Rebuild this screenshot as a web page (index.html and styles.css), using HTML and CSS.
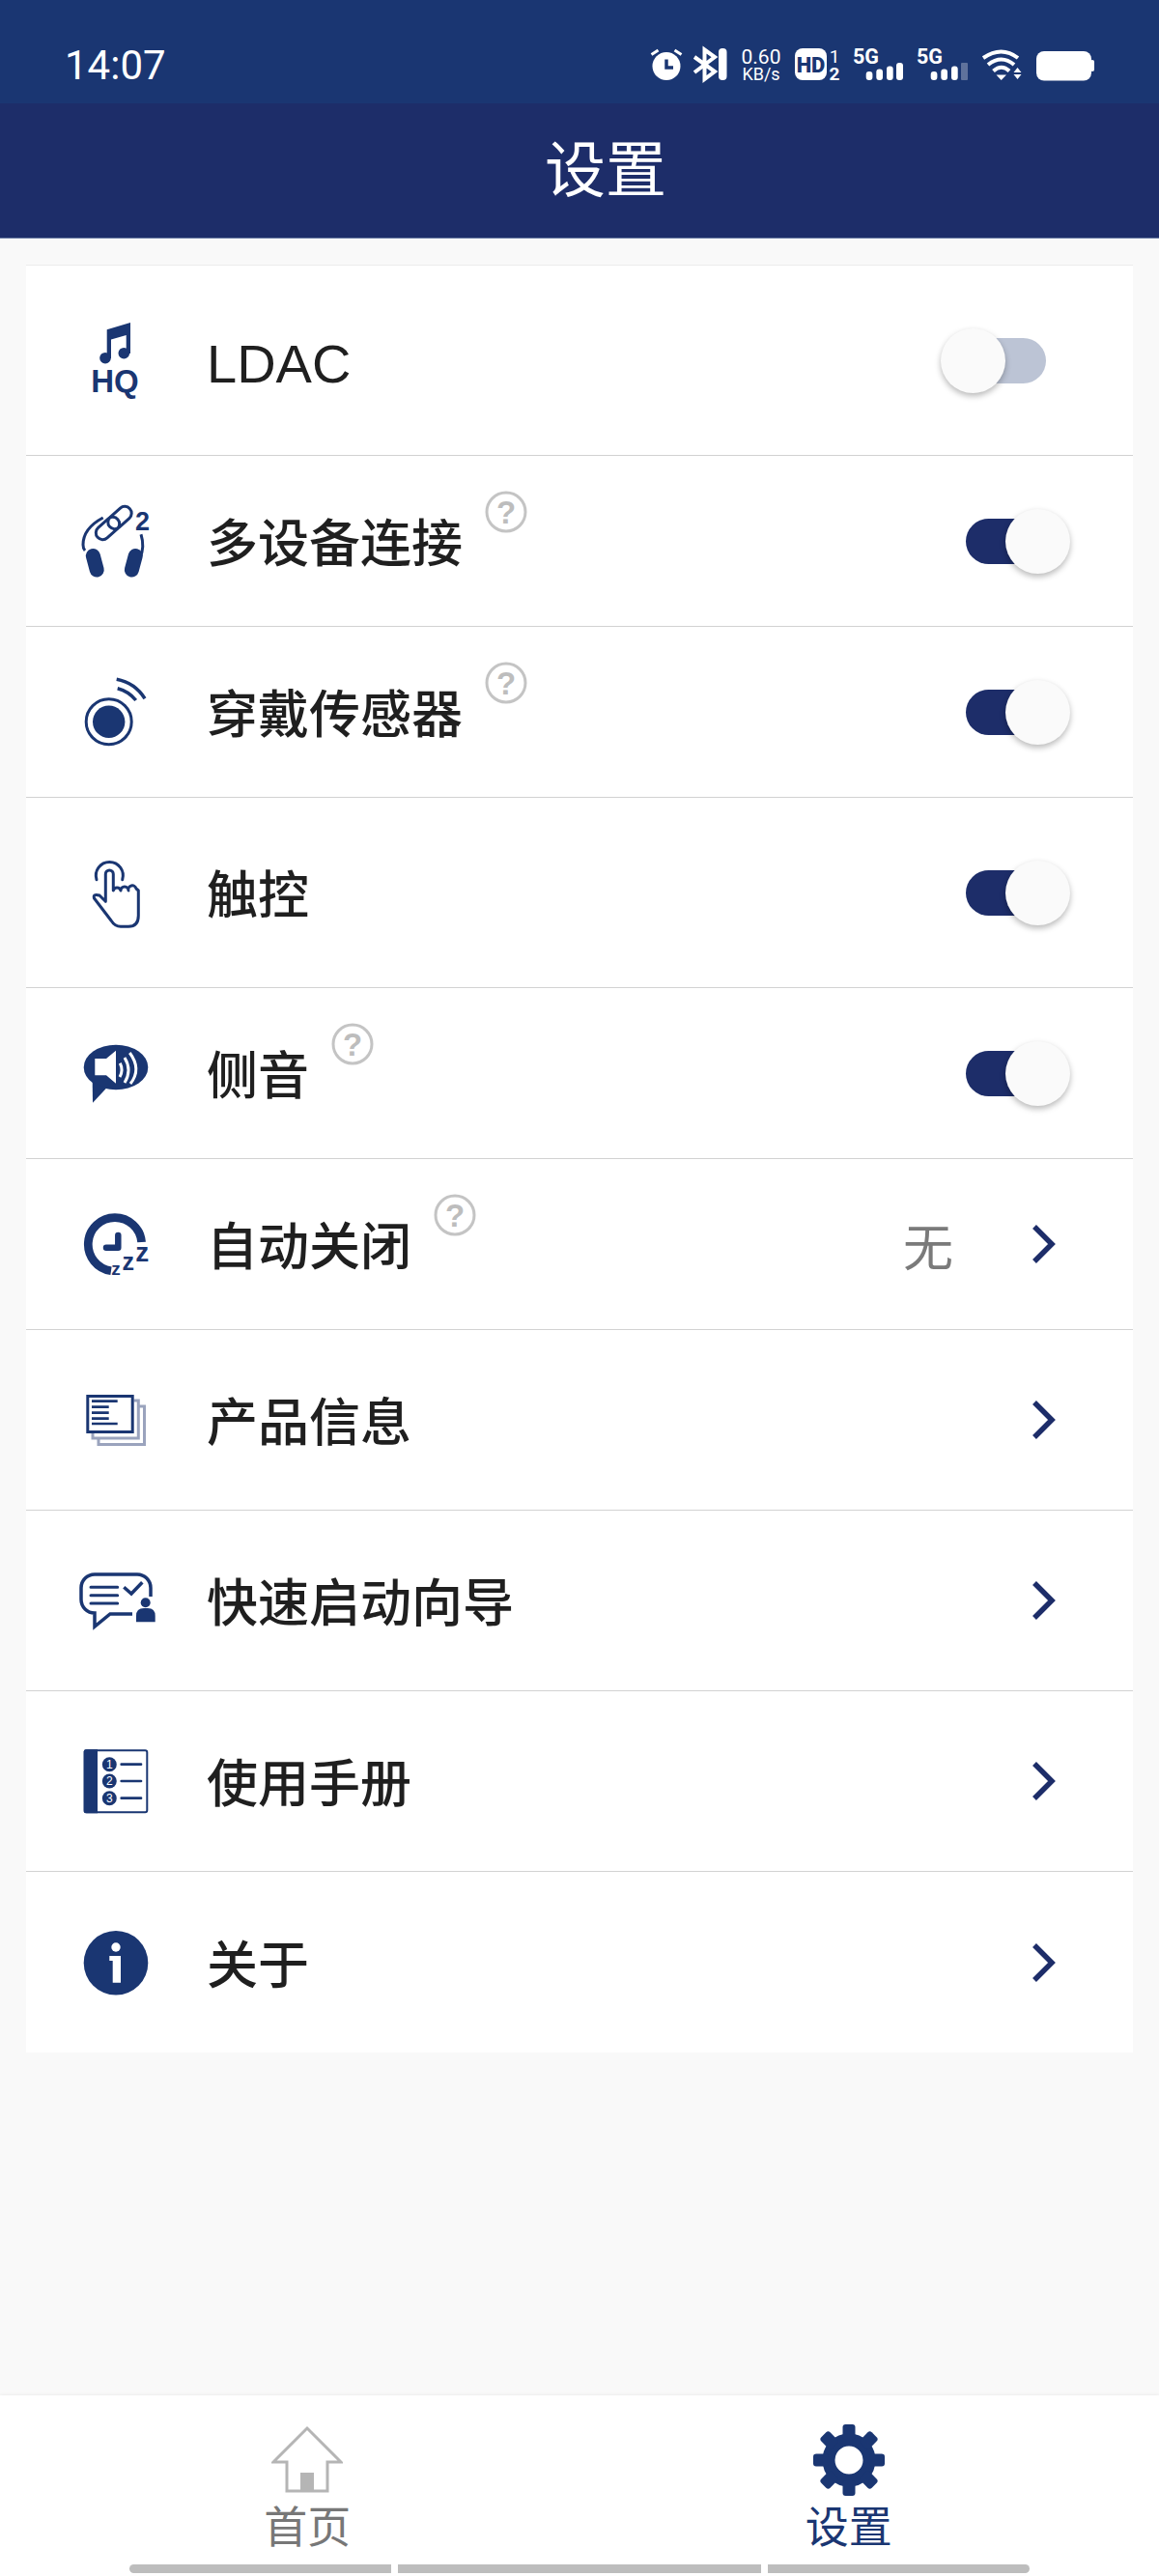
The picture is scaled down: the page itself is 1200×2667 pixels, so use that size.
FILE: index.html
```html
<!DOCTYPE html>
<html lang="zh-CN">
<head>
<meta charset="utf-8">
<title>设置</title>
<link rel="stylesheet" href="styles.css">
</head>
<body>
<div class="app">
  <header class="status">
    <span class="time">14:07</span>
    <div class="status-icons">
      <svg class="st w33" viewBox="0 0 33 36"><circle cx="17" cy="18.500" r="14.500" fill="#fff"/><path d="M1.500 6.500 8.500 2M25.500 2l7 4.500" stroke="#fff" stroke-width="3" fill="none"/><path d="M17 11.500V20h7" stroke="#1a3672" stroke-width="3.500" fill="none"/></svg>
      <svg class="st w36" viewBox="0 0 36 36"><path d="M2 9 23 24 12.500 32V1.500L23 9 2 25" stroke="#fff" stroke-width="4" fill="none"/><rect x="27" y="0" width="8.500" height="33" rx="4" fill="#fff"/></svg>
      <svg class="st w42" viewBox="0 0 42 36"><text class="st-num" x="21" y="16" font-size="21">0.60</text><text class="st-num" x="21" y="33" font-size="18">KB/s</text></svg>
      <svg class="st w47" viewBox="0 0 47 36"><rect width="33" height="33" rx="8" fill="#fff"/><text class="st-hd" x="16.500" y="24.500" font-size="22">HD</text><text class="st-num" x="41" y="15" font-size="19">1</text><text class="st-bold" x="41" y="33" font-size="19">2</text></svg>
      <svg class="st w52" viewBox="0 0 52 36"><text class="st-bold st-start" x="0" y="16" font-size="21.500">5G</text><rect x="13.700" y="24" width="6.700" height="9" rx="3" fill="#fff"/><rect x="24.300" y="21.500" width="6.700" height="11.500" rx="3" fill="#fff"/><rect x="35" y="18.500" width="6.700" height="14.500" rx="3" fill="#fff"/><rect x="45" y="15" width="7" height="18" rx="3" fill="#fff"/></svg>
      <svg class="st w53" viewBox="0 0 53 36"><text class="st-bold st-start" x="0" y="16" font-size="21.500">5G</text><rect x="14.700" y="24" width="6.700" height="9" rx="3" fill="#fff"/><rect x="25.300" y="21.500" width="6.700" height="11.500" rx="3" fill="#fff"/><rect x="36" y="18.500" width="6.700" height="14.500" rx="3" fill="#fff"/><rect x="46" y="15" width="7" height="18" rx="1" fill="#fff" opacity=".3"/></svg>
      <svg class="st w40" viewBox="0 0 40 36"><path d="M1 10Q20-3 37 10M6 17Q20 6 33 17M11.500 23.500Q20 16 28 23.500" stroke="#fff" stroke-width="4" fill="none"/><path d="M14.500 27.500H25L19.700 33ZM32.500 25 36.500 20 40.500 25ZM32.500 27H40.500L36.500 32Z" fill="#fff"/></svg>
      <svg class="st w60" viewBox="0 0 60 36"><rect y="3" width="57" height="30.500" rx="8" fill="#fff"/><rect x="56" y="12" width="4" height="12" rx="2" fill="#fff"/></svg>
    </div>
  </header>
  <nav class="topbar"><h1 class="title">设置</h1></nav>

  <main class="content">
    <section class="card">
      <div class="row h197">
        <svg class="icon" viewBox="0 0 80 80"><path d="M31.700 8.300 56 1V33H51.700V14L36 18.500V38H31.700Z" class="fill"/><circle cx="30" cy="37.700" r="5.800" class="fill"/><circle cx="49.300" cy="32.700" r="5.800" class="fill"/><text class="ic-text" x="40" y="73" font-size="33">HQ</text></svg>
        <span class="label latin">LDAC</span>
        <span class="toggle off"><span class="knob"></span></span>
      </div>
      <div class="row h177">
        <svg class="icon" viewBox="0 0 80 80"><g class="line" stroke-width="3"><rect x="18.500" y="20" width="28" height="14" rx="7" transform="rotate(-42 32.500 27)"/><rect x="31" y="9" width="28" height="14" rx="7" transform="rotate(-42 45 16)"/><path d="M27.700 16Q7 27 7 44Q7 48 9 50M67 33.300Q71 46 66 58"/></g><rect x="11.800" y="47.700" width="15" height="30" rx="7.500" class="fill" transform="rotate(-15 19.300 62.700)"/><rect x="51.800" y="47.700" width="15" height="30" rx="7.500" class="fill" transform="rotate(15 59.300 62.700)"/><text class="ic-text ic-start" x="61" y="29" font-size="27">2</text></svg>
        <span class="label">多设备连接</span>
        <svg class="help" viewBox="0 0 44 44"><circle cx="22" cy="22" r="20" fill="none" stroke="#c4c4c4" stroke-width="3"/><text class="help-q" x="22" y="34" font-size="33">?</text></svg>
        <span class="toggle"><span class="knob"></span></span>
      </div>
      <div class="row h177">
        <svg class="icon" viewBox="0 0 80 80"><circle cx="33.700" cy="50.300" r="16.700" class="fill"/><circle cx="33.700" cy="50.300" r="23.500" class="line" stroke-width="3"/><path d="M41.700 6.300A44.500 44.500 0 0 1 71 26.300M42.700 15.700A35.800 35.800 0 0 1 61.700 28" class="line" stroke-width="3.500"/></svg>
        <span class="label">穿戴传感器</span>
        <svg class="help" viewBox="0 0 44 44"><circle cx="22" cy="22" r="20" fill="none" stroke="#c4c4c4" stroke-width="3"/><text class="help-q" x="22" y="34" font-size="33">?</text></svg>
        <span class="toggle"><span class="knob"></span></span>
      </div>
      <div class="row h197">
        <svg class="icon" viewBox="0 0 80 80"><path d="M21 26.700A14 14 0 1 1 47.700 26.700" class="line round" stroke-width="3"/><path d="M30.300 49.300V21A4 4 0 0 1 38.300 21V37.700M38.300 38A4 4 0 0 1 46 38A4 4 0 0 1 54 38A4 4 0 0 1 62 36L64.300 38V64Q64.300 75.300 54 75.300H46Q40 75.300 36 69L18.500 46Q17 41 24 43L30.300 49.300" class="line round" stroke-width="3"/></svg>
        <span class="label">触控</span>
        <span class="toggle"><span class="knob"></span></span>
      </div>
      <div class="row h177">
        <svg class="icon" viewBox="0 0 80 80"><ellipse cx="41" cy="34" rx="33.300" ry="23.300" class="fill"/><path d="M16.700 49 17 70.700 31 55.700Z" class="fill"/><path d="M19.300 25H31L41 16.700V50.700L31 42.300H19.300Z" fill="#fff"/><path d="M45.300 29.700Q49 37 45 44M50 24Q58 37 50 50M55.300 19Q68 36 56 51" fill="none" stroke="#fff" stroke-width="3"/></svg>
        <span class="label">侧音</span>
        <svg class="help" viewBox="0 0 44 44"><circle cx="22" cy="22" r="20" fill="none" stroke="#c4c4c4" stroke-width="3"/><text class="help-q" x="22" y="34" font-size="33">?</text></svg>
        <span class="toggle"><span class="knob"></span></span>
      </div>
      <div class="row h177">
        <svg class="icon" viewBox="0 0 80 80"><path d="M67.600 38A27.700 27.700 0 1 0 36 67.700" class="line" stroke-width="8.700"/><path d="M43.300 31V43.700H31" class="line round" stroke-width="6.500"/><text class="ic-text" x="41" y="72" font-size="19">z</text><text class="ic-text" x="53.700" y="67" font-size="25">z</text><text class="ic-text" x="68.300" y="58" font-size="28">z</text></svg>
        <span class="label">自动关闭</span>
        <svg class="help" viewBox="0 0 44 44"><circle cx="22" cy="22" r="20" fill="none" stroke="#c4c4c4" stroke-width="3"/><text class="help-q" x="22" y="34" font-size="33">?</text></svg>
        <span class="value">无</span>
        <svg class="chev" viewBox="0 0 26 42"><path d="M4 3 22 21 4 39" fill="none" stroke="#1d2d69" stroke-width="5.500"/></svg>
      </div>
      <div class="row h187">
        <svg class="icon" viewBox="0 0 80 80"><path d="M59.700 20H64.300V59H17V54M65 26H70.500V65.500H23V60" fill="none" stroke="#9aa3bd" stroke-width="3"/><rect x="11.800" y="15.500" width="46.400" height="37" class="line" stroke-width="3"/><path d="M16 20.700H42.700M16 26.700H33.700M16 32.700H33.700M16 38.700H33.700M16 44H42.700" class="line" stroke-width="2.700"/></svg>
        <span class="label">产品信息</span>
        <svg class="chev" viewBox="0 0 26 42"><path d="M4 3 22 21 4 39" fill="none" stroke="#1d2d69" stroke-width="5.500"/></svg>
      </div>
      <div class="row h187">
        <svg class="icon" viewBox="0 0 80 80"><path d="M77 36V27A14 14 0 0 0 63 13H19A14 14 0 0 0 5 27V39A14 14 0 0 0 19 53V67L35 54H58" class="line" stroke-width="3.500"/><path d="M15 26.300H42.700M15 34.700H42.700M15 43H42.700" class="line round" stroke-width="3"/><path d="M49.300 26.300 57 33 68.300 21.300" class="line" stroke-width="3.500"/><circle cx="71.700" cy="42.300" r="5" class="fill"/><path d="M62 62.300V56Q62 48 70 48H74Q81.700 48 81.700 56V62.300Z" class="fill"/></svg>
        <span class="label">快速启动向导</span>
        <svg class="chev" viewBox="0 0 26 42"><path d="M4 3 22 21 4 39" fill="none" stroke="#1d2d69" stroke-width="5.500"/></svg>
      </div>
      <div class="row h187">
        <svg class="icon" viewBox="0 0 80 80"><rect x="8.700" y="8.300" width="64.600" height="64" rx="2" class="line" stroke-width="2"/><path d="M9.700 7.300H22V73.300H9.700A2 2 0 0 1 7.700 71.300V9.300A2 2 0 0 1 9.700 7.300Z" class="fill"/><circle cx="34.300" cy="22.700" r="7.500" class="fill"/><circle cx="34.300" cy="40" r="7.500" class="fill"/><circle cx="34.300" cy="57.700" r="7.500" class="fill"/><text class="ic-num" x="34.300" y="27" font-size="12">1</text><text class="ic-num" x="34.300" y="44.300" font-size="12">2</text><text class="ic-num" x="34.300" y="62" font-size="12">3</text><path d="M46.700 22.700H67M46.700 40H67M46.700 57.700H67" class="line round" stroke-width="2.700"/></svg>
        <span class="label">使用手册</span>
        <svg class="chev" viewBox="0 0 26 42"><path d="M4 3 22 21 4 39" fill="none" stroke="#1d2d69" stroke-width="5.500"/></svg>
      </div>
      <div class="row h187 last">
        <svg class="icon" viewBox="0 0 80 80"><circle cx="41" cy="40.300" r="33.300" class="fill"/><circle cx="41" cy="24" r="4.700" fill="#fff"/><path d="M34.300 33H46V60.700H37.700V38H34.300Z" fill="#fff"/></svg>
        <span class="label">关于</span>
        <svg class="chev" viewBox="0 0 26 42"><path d="M4 3 22 21 4 39" fill="none" stroke="#1d2d69" stroke-width="5.500"/></svg>
      </div>
    </section>
  </main>

  <footer class="tabbar">
    <div class="tabs">
      <div class="tab">
        <svg class="tab-icon" viewBox="0 0 74 74"><path d="M16 39H2L37 4 72 39H58V69H16Z" fill="#fff" stroke="#b5b5b5" stroke-width="3"/><rect x="30" y="50" width="14" height="18" fill="#b5b5b5"/></svg>
        <span class="tab-label">首页</span>
      </div>
      <div class="tab active">
        <svg class="tab-icon" viewBox="-37 -37 74 74"><circle r="21" fill="none" stroke="#1a3672" stroke-width="13"/><g fill="#1a3672"><rect x="-6.500" y="-37" width="13" height="16" rx="3"/><rect x="-6.500" y="-37" width="13" height="16" rx="3" transform="rotate(45)"/><rect x="-6.500" y="-37" width="13" height="16" rx="3" transform="rotate(90)"/><rect x="-6.500" y="-37" width="13" height="16" rx="3" transform="rotate(135)"/><rect x="-6.500" y="-37" width="13" height="16" rx="3" transform="rotate(180)"/><rect x="-6.500" y="-37" width="13" height="16" rx="3" transform="rotate(225)"/><rect x="-6.500" y="-37" width="13" height="16" rx="3" transform="rotate(270)"/><rect x="-6.500" y="-37" width="13" height="16" rx="3" transform="rotate(315)"/></g></svg>
        <span class="tab-label">设置</span>
      </div>
    </div>
    <div class="homebar">
      <span class="seg seg-a"></span>
      <span class="seg seg-b"></span>
      <span class="seg seg-c"></span>
    </div>
  </footer>
</div>
</body>
</html>
```

FILE: styles.css
```css
* { box-sizing: border-box; }
html, body { margin: 0; padding: 0; }
body {
  width: 1200px;
  height: 2667px;
  overflow: hidden;
  background: #f9f9f9;
  font-family: "Noto Sans CJK SC", "Liberation Sans", sans-serif;
}
.app { display: flex; flex-direction: column; height: 2667px; }

/* status bar */
.status {
  height: 107px;
  flex: none;
  background: #1a3672;
  display: flex;
  justify-content: space-between;
  align-items: flex-start;
  padding: 50px 67px 0;
  color: #fff;
}
.time { font-family: Roboto, sans-serif; font-size: 42px; line-height: 36px; }
.status-icons { display: flex; align-items: flex-start; }
.st { height: 36px; display: block; overflow: visible; }
.w33 { width: 33px; margin-right: 11px; }
.w36 { width: 36px; margin-right: 14px; }
.w42 { width: 42px; margin-right: 14px; }
.w47 { width: 47px; margin-right: 13px; }
.w52 { width: 52px; margin-right: 14px; }
.w53 { width: 53px; margin-right: 15px; }
.w40 { width: 40px; margin-right: 16px; }
.w60 { width: 60px; }
.st-num { font-family: Roboto, sans-serif; fill: #fff; text-anchor: middle; }
.st-bold { font-family: Roboto, sans-serif; font-weight: 700; fill: #fff; text-anchor: middle; }
.st-start { text-anchor: start; }
.st-hd { font-family: Roboto, sans-serif; font-weight: 900; fill: #1a3672; text-anchor: middle; }

/* nav */
.topbar {
  height: 140px;
  flex: none;
  background: #1d2d69;
  display: flex;
  align-items: center;
  justify-content: center;
  padding: 0 0 11px 54px;
  border-bottom: 1px solid #6c7ea6;
}
.title { margin: 0; color: #fff; font-size: 63px; font-weight: 400; line-height: 1.2; }

/* card */
.content { flex: 1; padding: 27px 27px 0; }
.card { background: #fff; border-top: 1px solid #ececec; }
.row {
  display: flex;
  align-items: center;
  padding-left: 52px;
  border-bottom: 1px solid #d2d2d2;
}
.row.last { border-bottom: 0; }
.h197 { height: 197px; }
.h177 { height: 177px; }
.h187 { height: 187px; }
.icon { width: 80px; height: 80px; flex: none; margin-right: 55px; overflow: visible; }
.fill { fill: #1a3672; }
.line { fill: none; stroke: #1a3672; }
.round { stroke-linecap: round; stroke-linejoin: round; }
.ic-text { font-family: "Liberation Sans", sans-serif; font-weight: 700; fill: #1a3672; text-anchor: middle; }
.ic-start { text-anchor: start; }
.ic-num { font-family: "Liberation Sans", sans-serif; fill: #fff; text-anchor: middle; }
.label { font-size: 53px; font-weight: 500; line-height: 72px; color: #1f1f1f; margin-top: -2px; }
.label.latin { font-family: "Liberation Sans", sans-serif; font-size: 56px; font-weight: 400; margin-top: 7px; }
.help { width: 44px; height: 44px; flex: none; margin: 0 0 60px 23px; }
.help-q { font-family: "Liberation Sans", sans-serif; font-weight: 700; fill: #bdbdbd; text-anchor: middle; }
.toggle {
  position: relative;
  width: 83px;
  height: 47px;
  flex: none;
  margin-left: auto;
  margin-right: 90px;
  border-radius: 24px;
  background: #1d2d69;
}
.toggle.off { background: #bcc4d5; }
.knob {
  position: absolute;
  top: -10px;
  right: -25px;
  width: 67px;
  height: 67px;
  border-radius: 50%;
  background: #fafafa;
  box-shadow: 0 3px 6px rgba(0, 0, 0, .28);
}
.toggle.off .knob { right: auto; left: -26px; }
.value { margin-left: auto; margin-right: 80px; font-size: 52px; line-height: 72px; color: #7a7a7a; margin-top: 1px; }
.chev { width: 26px; height: 42px; flex: none; margin-left: auto; margin-right: 80px; }
.value + .chev { margin-left: 0; }

/* tab bar */
.tabbar {
  height: 187px;
  flex: none;
  background: #fff;
  box-shadow: 0 -1px 3px rgba(0, 0, 0, .05);
  padding-top: 30px;
}
.tabs { display: flex; padding: 0 41px 0 38px; }
.tab { flex: 1; display: flex; flex-direction: column; align-items: center; }
.tab-icon { width: 74px; height: 74px; display: block; }
.tab-label { font-size: 45px; line-height: 50px; margin-top: 5px; color: #777; }
.tab.active .tab-label { color: #1a3672; }
.homebar { display: flex; gap: 7px; padding-left: 134px; margin-top: 16px; }
.seg { height: 9px; background: #bdbdbd; display: block; }
.seg-a { width: 271px; border-radius: 5px 0 0 5px; }
.seg-b { width: 376px; }
.seg-c { width: 271px; border-radius: 0 5px 5px 0; }
```
